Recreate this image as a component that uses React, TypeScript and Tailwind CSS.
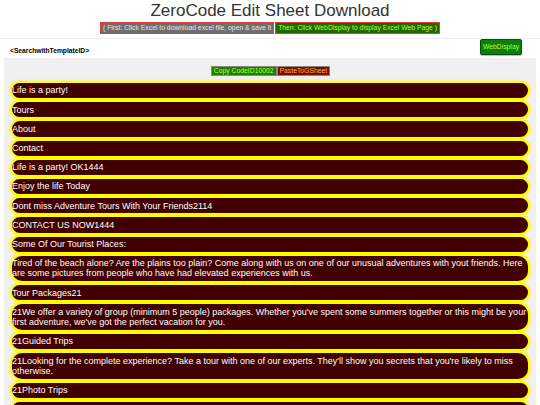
import React from "react";

const rows: string[] = [
  "Life is a party!",
  "Tours",
  "About",
  "Contact",
  "Life is a party! OK1444",
  "Enjoy the life Today",
  "Dont miss Adventure Tours With Your Friends2114",
  "CONTACT US NOW1444",
  "Some Of Our Tourist Places:",
  "Tired of the beach alone? Are the plains too plain? Come along with us on one of our unusual adventures with yout friends. Here are some pictures from people who have had elevated experiences with us.",
  "Tour Packages21",
  "21We offer a variety of group (minimum 5 people) packages. Whether you've spent some summers together or this might be your first adventure, we've got the perfect vacation for you.",
  "21Guided Trips",
  "21Looking for the complete experience? Take a tour with one of our experts. They'll show you secrets that you're likely to miss otherwise.",
  "21Photo Trips",
  "",
];

export default function App() {
  return (
    <div className="min-h-screen bg-white font-['Liberation_Sans',Arial,sans-serif]">
      <h1 className="text-center text-[17px] leading-[21px] text-[#333]">
        ZeroCode Edit Sheet Download
      </h1>

      {/* instructions */}
      <div className="mt-[1px] flex justify-center">
        <span className="h-[12px] border-[1.5px] border-[#e53935] bg-[#6e6e6e] px-[2px] text-[6.8px] leading-[9px] text-[#e6e6e6]">
          ( First: Click Excel to download excel file, open &amp; save it
        </span>
        <span className="ml-[1px] h-[12px] border-[1.5px] border-[#e53935] bg-[#1e6a00] px-[2px] text-[6.8px] leading-[9px] text-[#b5ff2a]">
          Then: Click WebDisplay to display Excel Web Page )
        </span>
      </div>

      {/* search row */}
      <div className="mt-[4px] flex h-[20px] items-start justify-between border-t border-[#ececec] pl-[10px] pr-[18px]">
        <span className="mt-[8px] text-[6.7px] font-bold leading-[8px] text-black">
          &lt;SearchwithTemplateID&gt;
        </span>
        <button className="h-[16px] w-[42px] rounded-[2px] border border-[#0a4f0a] bg-[#0b7f0b] text-[6.8px] leading-[14px] text-[#b5ff2a] shadow-[0_1px_1px_rgba(0,0,0,0.3)]">
          WebDisplay
        </button>
      </div>

      <div className="mx-[4px] bg-[#f0f0f0] pb-[4px] pt-[8px]">
        <div className="flex justify-center">
          <span className="ml-[1px] h-[10px] border border-[#888] bg-[#1b7f06] px-[2px] text-[6.8px] leading-[8px] text-[#b5ff2a]">
            Copy CodeID10002
          </span>
          <span className="h-[10px] border border-[#888] bg-[#7a0a00] px-[2px] text-[6.8px] leading-[8px] text-[#ffb02e]">
            PasteToGSheet
          </span>
        </div>

        <div className="mx-[6px] mt-[5px] flex flex-col">
          {rows.map((text, idx) => (
            <div
              key={idx}
              className="min-h-[19.2px] rounded-[12px] border-2 border-[#ffff00] bg-[#400000] py-[2.4px] pl-0 pr-0 text-[9px] leading-[10.4px] text-white shadow-[0_0_3px_#ffee00]"
            >
              {text}
            </div>
          ))}
        </div>
      </div>
    </div>
  );
}
